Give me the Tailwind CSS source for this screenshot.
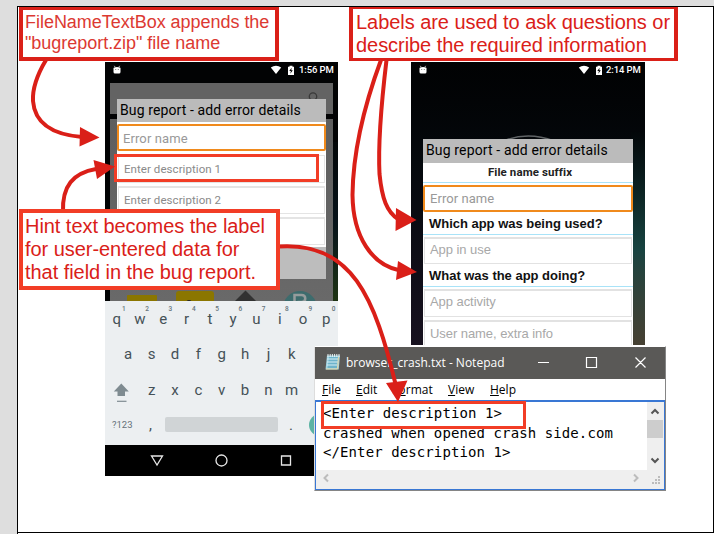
<!DOCTYPE html>
<html lang="en">
<head>
<meta charset="utf-8">
<title>Bug report annotations</title>
<script src="https://cdn.jsdelivr.net/npm/@tailwindcss/browser@4"></script>
</head>
<body class="bg-[#dedede] overflow-hidden">
<main class="relative w-[714px] h-[534px] overflow-hidden pl-[17px] pt-[6px] font-['Roboto',sans-serif]">
  <div class="w-[697px] h-[528px] bg-white border-l border-t border-black flex flex-col justify-end"><div class="h-[2px] border-t border-black"></div></div>
  <div class="absolute right-0 top-[6px] w-px h-[527px] bg-black"></div>

  <!-- Phone with hint text -->
  <section class="absolute left-[105px] top-[62px] w-[233px] h-[414px] bg-[#020304] overflow-hidden flex flex-col">
    <div class="absolute left-[228px] top-[80px] w-[5px] h-[159px] bg-linear-to-b from-[#030708] via-[#07131a] to-[#1f3412]"></div>
    <div class="absolute left-[5px] top-[21px] w-[223px] h-[31px] bg-[#636363]"></div>
    <div class="absolute left-[5px] top-[57px] w-[223px] h-[182px] bg-linear-to-b from-[#5e5e5e] to-[#696969]"></div>
    <svg class="absolute left-0 top-0" width="233" height="240" viewBox="0 0 233 240">
      <circle cx="208" cy="34.5" r="3.7" fill="none" stroke="#393939" stroke-width="1.3"/>
      <path d="M210 37l4 4" stroke="#393939" stroke-width="1.3"/>
      <rect x="22" y="233" width="30" height="8" rx="1" fill="#8b7600"/>
      <rect x="71" y="229" width="38" height="15" rx="3" fill="#8b7600"/>
      <circle cx="84" cy="241" r="3" fill="#222"/>
      <path d="M140.500 228.500l13 13h-26z" fill="#323232"/>
      <circle cx="195" cy="246" r="17" fill="#3d6c6d"/>
      <path d="M189.500 242v-9h7c5 0 5 7 0 7h-4" fill="none" stroke="#969c9c" stroke-width="2.500"/>
    </svg>
    <header class="h-[16px] flex items-center pl-[8px] pr-[6px] text-white">
      <svg width="8" height="10" viewBox="0 0 8 10"><path d="M0.500 3.500Q.5 2 4 2T7.500 3.500V7Q7.500 8.600 6 8.600H2Q.5 8.600 .5 7z" fill="#fff"/><path d="M1.300.8l1 1.600M6.700.8l-1 1.600" stroke="#fff" stroke-width=".7"/><path d="M2.200 4h1v.8h-1zM4.800 4h1v.8h-1z" fill="#555"/></svg>
      <svg class="ml-auto" width="12" height="10" viewBox="0 0 12 10"><path d="M.8 2.600Q6-1 11.200 2.600L6 9z" fill="#fff"/></svg>
      <svg class="ml-[5px]" width="8" height="11" viewBox="0 0 8 11"><path d="M1 1.800h1.500V.8h3v1H7V10H1z" fill="#fff"/><path d="M4.600 2.800L2.300 6h1.600l-.6 2.700L5.800 5.300H4.300z" fill="#000"/></svg>
      <span class="ml-[4px] text-[9.5px] leading-[16px] font-medium whitespace-nowrap w-[33px] tracking-[-.1px]">1:56 PM</span>
    </header>
    <div class="relative ml-[12px] mt-[21px] w-[209px] h-[180px] bg-white flex flex-col">
      <h2 class="h-[23px] shrink-0 bg-[#bbb] pl-[3px] text-[14px] leading-[22px] tracking-[.11px] text-black whitespace-nowrap">Bug report - add error details</h2>
      <div class="mt-[2px] h-[27px] shrink-0 border-2 border-[#f08a1c] rounded-[2px] pl-[4px] text-[13px] leading-[25px] tracking-[.1px] text-[#999]">Error name</div>
      <div class="mt-[4px] h-[28px] shrink-0 border border-[#e4e4e4] mx-px pl-[5px] text-[11.5px] leading-[26px] tracking-[.06px] text-[#8a8a8a]">Enter description 1</div>
      <div class="mt-[3px] h-[28px] shrink-0 border border-t-2 border-[#e4e4e4] mx-px pl-[5px] text-[11.5px] leading-[24px] tracking-[.06px] text-[#8a8a8a]">Enter description 2</div>
      <div class="mt-[3px] h-[28px] shrink-0 border border-t-2 border-[#e4e4e4] mx-px"></div>
      <div class="mt-[2px] grow bg-[#bdbdbd]"></div>
    </div>
    <div class="relative mt-[22px] h-[144px] shrink-0 bg-[#eceff1] text-[15px] text-[#455157]">
      <div class="grid grid-cols-10 h-[36px] text-center leading-[36px]">
        <span class="relative">q<sup class="absolute left-[17px] top-[4px] text-[6.5px] leading-[8px] font-medium text-[#66747b]">1</sup></span>
        <span class="relative">w<sup class="absolute left-[17px] top-[4px] text-[6.5px] leading-[8px] font-medium text-[#66747b]">2</sup></span>
        <span class="relative">e<sup class="absolute left-[17px] top-[4px] text-[6.5px] leading-[8px] font-medium text-[#66747b]">3</sup></span>
        <span class="relative">r<sup class="absolute left-[17px] top-[4px] text-[6.5px] leading-[8px] font-medium text-[#66747b]">4</sup></span>
        <span class="relative">t<sup class="absolute left-[17px] top-[4px] text-[6.5px] leading-[8px] font-medium text-[#66747b]">5</sup></span>
        <span class="relative">y<sup class="absolute left-[17px] top-[4px] text-[6.5px] leading-[8px] font-medium text-[#66747b]">6</sup></span>
        <span class="relative">u<sup class="absolute left-[17px] top-[4px] text-[6.5px] leading-[8px] font-medium text-[#66747b]">7</sup></span>
        <span class="relative">i<sup class="absolute left-[17px] top-[4px] text-[6.5px] leading-[8px] font-medium text-[#66747b]">8</sup></span>
        <span class="relative">o<sup class="absolute left-[17px] top-[4px] text-[6.5px] leading-[8px] font-medium text-[#66747b]">9</sup></span>
        <span class="relative">p<sup class="absolute left-[17px] top-[4px] text-[6.5px] leading-[8px] font-medium text-[#66747b]">0</sup></span>
      </div>
      <div class="grid grid-cols-8 w-[187px] ml-[11.5px] h-[36px] text-center leading-[35px]">
        <span>a</span><span>s</span><span>d</span><span>f</span><span>g</span><span>h</span><span>j</span><span>k</span>
      </div>
      <div class="flex h-[36px]">
        <svg class="ml-[8px] mt-[9px]" width="17" height="21" viewBox="0 0 17 21"><path d="M8.300 1.500L15.800 9.500H12V14H4.500V9.500H.8z" fill="#7f8b91"/><path d="M4 19.300h9.500" stroke="#7f8b91" stroke-width="1.200"/></svg>
        <div class="grid grid-cols-7 w-[163.3px] ml-[10px] text-center leading-[35px]"><span>z</span><span>x</span><span>c</span><span>v</span><span>b</span><span>n</span><span>m</span></div>
      </div>
      <div class="relative flex h-[36px] leading-[32px]">
        <span class="ml-[7px] w-[37px] text-[9.500px] text-[#65727a]">?123</span><span class="w-[16px]">,</span>
        <div class="mt-[8px] w-[113px] h-[15px] rounded-[2px] bg-[#d0d4d6]"></div><span class="ml-[11px]">.</span>
        <div class="absolute left-[204px] top-[5px] size-[22px] rounded-full bg-[#5cb3a4]"></div>
      </div>
    </div>
    <nav class="relative h-[31px] shrink-0 bg-black">
      <svg width="233" height="31" viewBox="0 0 233 31" fill="none" stroke="#e6e6e6" stroke-width="1.300"><path d="M46.500 11h11l-5.500 9z"/><circle cx="116.500" cy="15.500" r="5.500"/><path d="M176.500 11h9v9h-9z"/></svg>
    </nav>
  </section>

  <!-- Phone with labels -->
  <section class="absolute left-[411px] top-[62px] w-[234px] h-[283px] overflow-hidden bg-linear-to-b from-[#010203] from-0% via-[#05090d] via-35% to-[#17111f] flex flex-col">
    <div class="absolute right-0 top-[70px] w-[14px] h-[213px] bg-linear-to-b from-[#030709] via-[#174340] via-55% to-[#464032]"></div>
    <svg class="absolute left-[72px] top-[70px]" width="90" height="12"><path d="M20 9Q45-1 71 9" fill="none" stroke="#606466" stroke-width="1.500"/></svg>
    <header class="relative h-[16px] flex items-center pl-[8px] pr-[6px] text-white">
      <svg width="8" height="10" viewBox="0 0 8 10"><path d="M0.500 3.500Q.5 2 4 2T7.500 3.500V7Q7.500 8.600 6 8.600H2Q.5 8.600 .5 7z" fill="#fff"/><path d="M1.300.8l1 1.600M6.700.8l-1 1.600" stroke="#fff" stroke-width=".7"/><path d="M2.200 4h1v.8h-1zM4.800 4h1v.8h-1z" fill="#555"/></svg>
      <svg class="ml-auto" width="12" height="10" viewBox="0 0 12 10"><path d="M.8 2.600Q6-1 11.200 2.600L6 9z" fill="#fff"/></svg>
      <svg class="ml-[5px]" width="8" height="11" viewBox="0 0 8 11"><path d="M1 1.800h1.500V.8h3v1H7V10H1z" fill="#fff"/><path d="M4.600 2.800L2.300 6h1.600l-.6 2.700L5.800 5.300H4.300z" fill="#000"/></svg>
      <span class="ml-[3px] text-[9.5px] leading-[16px] font-medium whitespace-nowrap w-[33px] tracking-[-.1px]">2:14 PM</span>
    </header>
    <div class="relative ml-[12px] mt-[61px] w-[210px] h-[206px] bg-white flex flex-col font-['Liberation_Sans',Arial,sans-serif] text-[13px] text-[#a8a8a8] tracking-[-.06px]">
      <h2 class="h-[24px] shrink-0 bg-[#bbb] pl-[3px] font-['Roboto',sans-serif] text-[14px] leading-[22px] tracking-[.14px] text-black whitespace-nowrap">Bug report - add error details</h2>
      <h3 class="h-[20px] shrink-0 border-b border-[#a9e3f8] text-center pl-[4px] font-['Roboto',sans-serif] font-bold text-[11.5px] leading-[18px] tracking-[.1px] text-[#222]">File name suffix</h3>
      <div class="mt-[2px] h-[27px] shrink-0 border-2 border-[#f08a1c] rounded-[2px] pl-[5px] font-['Roboto',sans-serif] leading-[23px] tracking-[.05px] text-[#999]">Error name</div>
      <h3 class="h-[23px] shrink-0 border-b border-[#a9e3f8] pl-[6px] font-bold leading-[23px] tracking-[-.02px] text-[#111]">Which app was being used?</h3>
      <div class="mt-[2px] h-[27px] shrink-0 border border-t-2 border-[#e2e2e2] mx-px pl-[5px] leading-[22px]">App in use</div>
      <h3 class="h-[23px] shrink-0 border-b border-[#a9e3f8] pl-[6px] font-bold leading-[23px] tracking-[-.02px] text-[#111]">What was the app doing?</h3>
      <div class="mt-[2px] h-[28px] shrink-0 border border-t-2 border-[#e2e2e2] mx-px pl-[5px] leading-[22px]">App activity</div>
      <div class="mt-[3px] h-[28px] shrink-0 border border-t-2 border-[#e2e2e2] mx-px pl-[5px] leading-[24px]">User name, extra info</div>
    </div>
  </section>

  <!-- Notepad window -->
  <section class="absolute left-[314px] top-[346px] w-[352px] h-[145px] bg-white border border-[#858585] border-t-white border-l-[#ddd] flex flex-col font-['Open_Sans','Noto_Sans',sans-serif]">
    <header class="h-[32px] shrink-0 bg-[#5a5957] flex text-white">
      <svg class="ml-[9px] mt-[6px]" width="18" height="18" viewBox="0 0 18 18"><path d="M3 2.500h13l-1.300 14H1.500z" fill="#a2d3e2"/><path d="M5 4h9l-1 11H3.500z" fill="#6eb3ca"/><path d="M3 6h11M3 9h11M3 12h10" stroke="#d7eef4" stroke-width="1"/><path d="M4 1v3M6.200 1v3M8.400 1v3M10.600 1v3M12.800 1v3M15 1v3" stroke="#e9f2f2" stroke-width="1"/><path d="M14.500 4l-1 12H2" fill="none" stroke="#e2d6a4"/></svg>
      <span class="ml-[4px] text-[12px] leading-[32px] whitespace-nowrap">browser_crash.txt - Notepad</span>
      <svg class="absolute right-0 top-0" width="140" height="32" viewBox="0 0 140 32" fill="none" stroke="#fff" stroke-width="1.200"><path d="M13 15.500h11M61.500 10.500h10v10h-10zM110.500 10.500l10 10M120.500 10.500l-10 10"/></svg>
    </header>
    <nav class="h-[21px] shrink-0 text-[12px] leading-[22px] text-black flex pl-[7px]">
      <span class="w-[34px]"><u>F</u>ile</span><span class="w-[36px]"><u>E</u>dit</span><span class="w-[56px] tracking-[.1px]">F<u>o</u>rmat</span><span class="w-[42px]"><u>V</u>iew</span><span><u>H</u>elp</span>
    </nav>
    <div class="grow border-2 border-[#3977d4] border-l border-b border-r grid grid-cols-[1fr_16px] grid-rows-[1fr_17px] pr-[3px] pb-[2px] bg-[#efefef]">
      <div class="bg-white pl-[7px] pt-[2px] font-['DejaVu_Sans_Mono',monospace] text-[14px] tracking-[.1px] leading-[19.500px] text-black whitespace-pre overflow-hidden">&lt;Enter description 1&gt;
crashed when opened crash side.com
&lt;/Enter description 1&gt;</div>
      <svg width="16" height="68" viewBox="0 0 16 68"><path d="M0 18h16v18H0z" fill="#cdcdcd"/><path d="M4.500 11.500L8 8l3.500 3.500M4.500 56.500L8 60l3.500-3.500" fill="none" stroke="#555" stroke-width="2"/></svg>
      <svg width="331" height="17" viewBox="0 0 331 17"><path d="M12 4.500L8.500 8l3.500 3.500M318 4.500l3.500 3.500-3.500 3.500" fill="none" stroke="#bcbcbc" stroke-width="2"/></svg>
      <svg width="16" height="17" viewBox="0 0 16 17" fill="#bcbcbc"><path d="M11 6h2v2h-2zM8 9h2v2H8zM11 9h2v2h-2zM5 12h2v2H5zM8 12h2v2H8zM11 12h2v2h-2z"/></svg>
    </div>
  </section>

  <!-- Highlight frames -->
  <div class="absolute left-[114px] top-[154px] w-[205px] h-[28px] border-3 border-[#f23d26]"></div>
  <div class="absolute left-[321px] top-[401px] w-[205px] h-[28px] border-3 border-[#f23d26]"></div>

  <!-- Arrows -->
  <svg class="absolute left-0 top-0" width="714" height="534" viewBox="0 0 714 534">
    <g fill="none" stroke="#da1f18" stroke-width="4">
      <path d="M46 60C34 80 32.500 92 33 101C35 127 58 135 82 137"/>
      <path d="M63 212C62 186 73 173 96 169"/>
      <path d="M381 60C364 106 353 150 352.500 195C353 237 372 265 400 270.500"/>
      <path d="M386.500 60C381 106 378 145 379.500 174C382 199 387 212 398 219"/>
      <path d="M278 246.500C352 241 375 298 396 386"/>
    </g>
    <path fill="#da1f18" d="M80 127L99.500 137.500L79.500 146.500zM93.500 160L115 166.500L97 179zM398 261L417 272L396 280zM396 208L416.500 220L395.500 231zM386 383L407.500 380.500L398 402z"/>
  </svg>

  <!-- Callouts -->
  <div class="absolute left-[19px] top-[7px] w-[260px] h-[54px] bg-white border-x-4 border-t-3 border-b-4 border-[#da2018] pl-[2px] pt-[2px] font-['Liberation_Sans',Arial,sans-serif] text-[18px] leading-[20.700px] tracking-[-.03px] text-[#dc3932] whitespace-nowrap">FileNameTextBox appends the<br>"bugreport.zip" file name</div>
  <div class="absolute left-[349px] top-[7px] w-[329px] h-[54px] bg-white border-x-4 border-t-2 border-b-3 border-[#da2018] pl-[3px] pt-[2px] font-['Liberation_Sans',Arial,sans-serif] text-[20px] leading-[23px] tracking-[-.05px] text-[#da2018] whitespace-nowrap">Labels are used to ask questions or<br>describe the required information</div>
  <div class="absolute left-[19px] top-[209px] w-[261px] h-[81px] bg-white border-4 border-[#f23d26] pl-[2px] pt-[2px] font-['Liberation_Sans',Arial,sans-serif] text-[20px] leading-[23px] tracking-[-.05px] text-[#da2018] whitespace-nowrap">Hint text becomes the label<br>for user-entered data for<br>that field in the bug report.</div>
</main>
</body>
</html>
